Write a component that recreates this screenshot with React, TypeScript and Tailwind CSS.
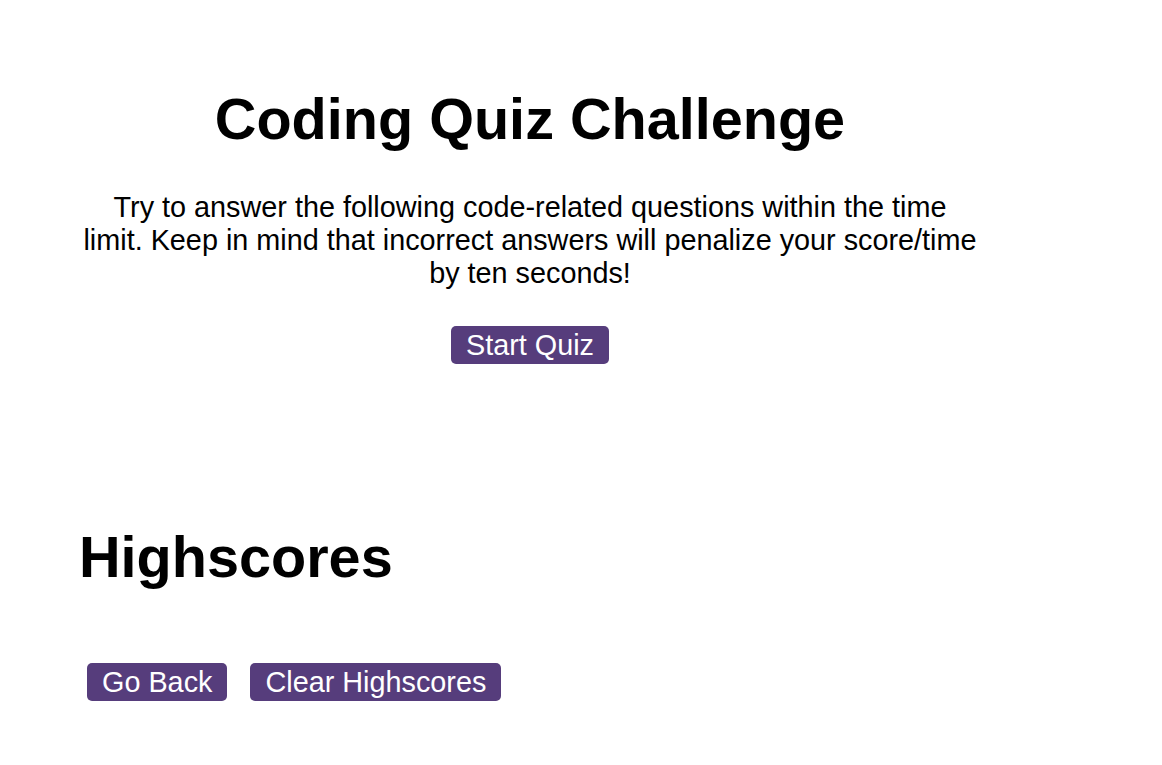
export default function App() {
  const font = { fontFamily: '"Liberation Sans", Arial, sans-serif' };
  return (
    <div className="min-h-screen bg-white text-black" style={font}>
      <div className="pl-[79px] pt-[86px]">
        <section className="w-[902px] flex flex-col items-center text-center">
          <h1 className="text-[57.6px] font-bold leading-[66px] m-0">Coding Quiz Challenge</h1>
          <p className="mt-[39px] px-[2px] text-[28.8px] leading-[33px]">
            Try to answer the following code-related questions within the time limit. Keep in mind that incorrect answers will penalize your score/time by ten seconds!
          </p>
          <button className="mt-[36px] bg-[#563d7c] text-white text-[28.8px] leading-[32px] px-[15px] py-[3px] rounded-[5px]">
            Start Quiz
          </button>
        </section>
        <section className="mt-[160px]">
          <h2 className="text-[57.6px] font-bold leading-[66px] m-0">Highscores</h2>
          <div className="mt-[73px] ml-[8px] flex gap-[23px]">
            <button className="bg-[#563d7c] text-white text-[28.8px] leading-[32px] px-[15px] py-[3px] rounded-[5px]">
              Go Back
            </button>
            <button className="bg-[#563d7c] text-white text-[28.8px] leading-[32px] px-[15px] py-[3px] rounded-[5px]">
              Clear Highscores
            </button>
          </div>
        </section>
      </div>
    </div>
  );
}
